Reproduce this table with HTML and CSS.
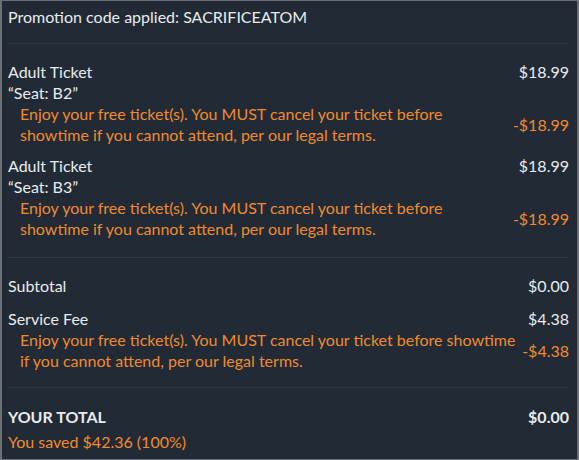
FILE: index.html
```html
<!DOCTYPE html>
<html>
<head>
<meta charset="utf-8">
<link rel="stylesheet" href="styles.css">
</head>
<body>
<div class="summary">
  <div class="promo">Promotion code applied: SACRIFICEATOM</div>
  <div class="divider"></div>
  <div class="items">
    <div class="item">
      <div class="row"><span>Adult Ticket</span><span>$18.99</span></div>
      <div class="seat">“Seat: B2”</div>
      <div class="discount">
        <span class="desc">Enjoy your free ticket(s). You MUST cancel your ticket before showtime if you cannot attend, per our legal terms.</span>
        <span class="amt">-$18.99</span>
      </div>
    </div>
    <div class="item">
      <div class="row"><span>Adult Ticket</span><span>$18.99</span></div>
      <div class="seat">“Seat: B3”</div>
      <div class="discount">
        <span class="desc">Enjoy your free ticket(s). You MUST cancel your ticket before showtime if you cannot attend, per our legal terms.</span>
        <span class="amt">-$18.99</span>
      </div>
    </div>
  </div>
  <div class="divider divider-after-items"></div>
  <div class="totals">
    <div class="row"><span>Subtotal</span><span>$0.00</span></div>
    <div class="item">
      <div class="row"><span>Service Fee</span><span>$4.38</span></div>
      <div class="discount">
        <span class="desc">Enjoy your free ticket(s). You MUST cancel your ticket before showtime if you cannot attend, per our legal terms.</span>
        <span class="amt">-$4.38</span>
      </div>
    </div>
  </div>
  <div class="divider"></div>
  <div class="grand">
    <div class="row total"><span>YOUR TOTAL</span><span>$0.00</span></div>
    <div class="saved">You saved $42.36 (100%)</div>
  </div>
</div>
</body>
</html>
```
FILE: styles.css
```css
html, body {
  margin: 0;
  padding: 0;
  background: #212a35;
}
.summary {
  box-sizing: border-box;
  width: 579px;
  height: 460px;
  border: 1px solid #6b7077;
  border-right-width: 2px;
  border-left-width: 2px;
  background: #212a35;
  padding: 5px 8px 0 6px;
  font-family: Lato, "Open Sans", sans-serif;
  font-size: 16px;
  line-height: 21px;
  color: #e9ecef;
}
.divider {
  height: 1px;
  background: #2d3744;
  margin: 16px 0 17px;
}
.divider-after-items {
  margin-top: 18px;
}
.row {
  display: flex;
  justify-content: space-between;
}
.items {
  display: flex;
  flex-direction: column;
  gap: 10px;
}
.discount {
  display: flex;
  align-items: center;
  padding-left: 12px;
  color: #f08a30;
}
.desc {
  flex: 1;
}
.amt {
  flex: none;
}
.totals {
  display: flex;
  flex-direction: column;
  gap: 12px;
}
.total {
  font-weight: 700;
}
.grand {
  padding-top: 1px;
}
.saved {
  color: #f08a30;
  margin-top: 4px;
}
```
